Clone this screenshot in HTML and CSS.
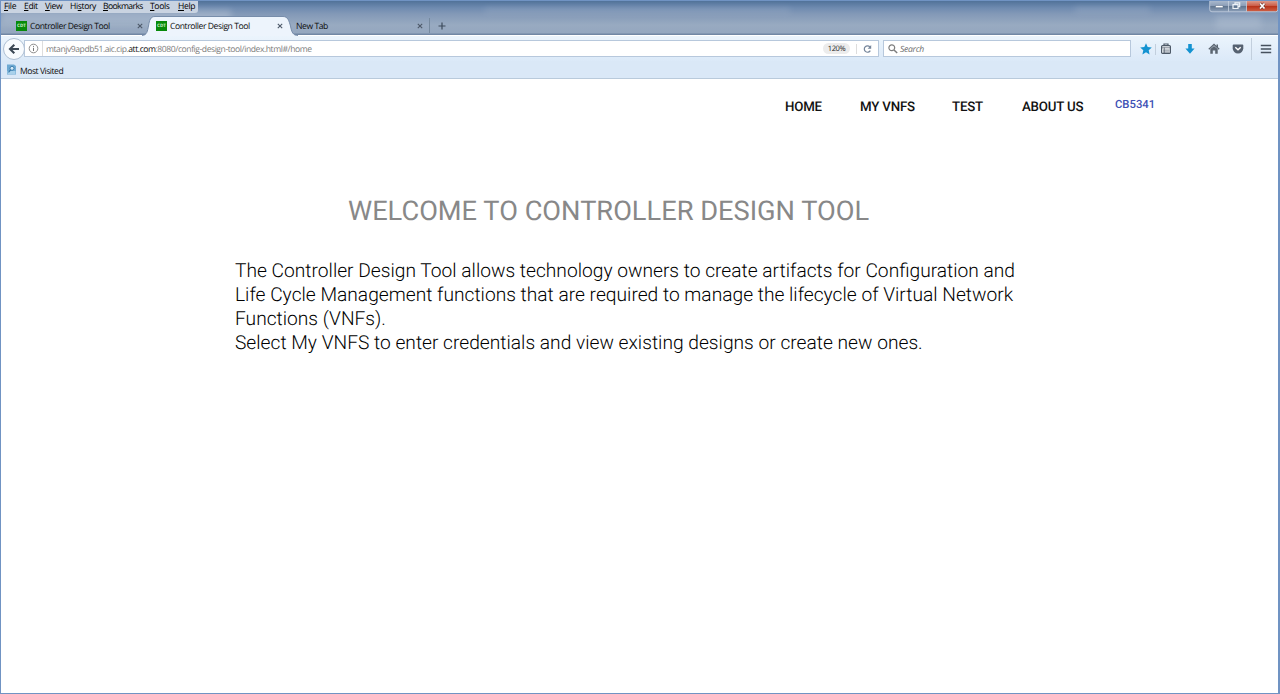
FILE: index.html
```html
<!DOCTYPE html>
<html lang="en">
<head>
<meta charset="utf-8">
<title>Controller Design Tool</title>
<link rel="stylesheet" href="styles.css">
</head>
<body>
<div class="window">
  <header class="titlebar">
    <div class="smudges"><i class="smudge smudge-a"></i><i class="smudge smudge-b"></i><i class="smudge smudge-c"></i><i class="smudge smudge-d"></i></div>
    <div class="top-row">
      <nav class="menubar">
        <span class="menu m-file"><u>F</u>ile</span><span class="menu m-edit"><u>E</u>dit</span><span class="menu m-view"><u>V</u>iew</span><span class="menu m-history">Hi<u>s</u>tory</span><span class="menu m-bookmarks"><u>B</u>ookmarks</span><span class="menu m-tools"><u>T</u>ools</span><span class="menu m-help"><u>H</u>elp</span>
      </nav>
      <svg class="controls" width="70" height="12" viewBox="0 0 70 12">
        <defs>
          <linearGradient id="glass" x1="0" y1="0" x2="0" y2="1"><stop offset="0" stop-color="#a9b8cc"/><stop offset=".45" stop-color="#8b9db7"/><stop offset=".5" stop-color="#60758f"/><stop offset="1" stop-color="#8b9eb8"/></linearGradient>
          <linearGradient id="red" x1="0" y1="0" x2="0" y2="1"><stop offset="0" stop-color="#dc9a8b"/><stop offset=".45" stop-color="#cc5d48"/><stop offset=".5" stop-color="#b83219"/><stop offset="1" stop-color="#cf6146"/></linearGradient>
        </defs>
        <path d="M1 0H37.500V10.500H3Q1 10.500 1 8.500Z" fill="url(#glass)"/>
        <path d="M37.500 0H68.500V8.500Q68.500 10.500 66.500 10.500H37.500Z" fill="url(#red)"/>
        <path d="M.7 0V8.500Q.7 10.800 3 10.800H66.500Q68.800 10.800 68.800 8.500V0M19.500 0V10.500M37.500 0V10.500" fill="none" stroke="#c6d0de" stroke-width=".8"/>
        <path d="M6.500 4.500H14V6.700H6.500Z" fill="#fff" stroke="#566982" stroke-width=".5"/>
        <path d="M24 3.500H29V7.500H24ZM26 3V1.800H30.700V5.700H29.500" fill="none" stroke="#eef2f7" stroke-width="1.200"/>
        <path d="M51 2.500L55.500 7.500M55.500 2.500L51 7.500" stroke="#70392f" stroke-width="2.800"/>
        <path d="M51 2.500L55.500 7.500M55.500 2.500L51 7.500" stroke="#fff" stroke-width="1.700"/>
      </svg>
    </div>
    <div class="tabs">
      <div class="tab"><span class="favicon">CDT</span><span class="tab-title">Controller Design Tool</span><svg class="close" viewBox="0 0 6 6"><path d="M.8.8L5.200 5.200M5.200.8L.8 5.200"/></svg></div>
      <div class="tab active">
        <svg class="tab-shape" width="156" height="20" viewBox="0 0 156 20"><path d="M0 19.500C5 19.300 5.500 15 6.500 10C7.500 4 8.500 .5 13 .5H141C146 .5 147 5 148.500 10C149.500 16 151 19.500 156 19.500V20H0Z" fill="#edf4fc"/><path d="M0 19.500C5 19.300 5.500 15 6.500 10C7.500 4 8.500 .5 13 .5H141C146 .5 147 5 148.500 10C149.500 16 151 19.500 156 19.500" fill="none" stroke="#6f86a5" stroke-width=".9"/></svg>
        <span class="favicon">CDT</span><span class="tab-title">Controller Design Tool</span><svg class="close" viewBox="0 0 6 6"><path d="M.8.8L5.200 5.200M5.200.8L.8 5.200"/></svg>
      </div>
      <div class="tab last"><span class="tab-title newtab">New Tab</span><svg class="close" viewBox="0 0 6 6"><path d="M.8.8L5.200 5.200M5.200.8L.8 5.200"/></svg></div>
      <svg class="plus" width="8" height="8" viewBox="0 0 8 8"><path d="M4 .5V7.500M.5 4H7.500" stroke="#3d4b5c" stroke-width="1.200"/></svg>
    </div>
  </header>

  <div class="navbar">
    <svg class="back" width="24" height="24" viewBox="0 0 24 24"><circle cx="12" cy="12" r="10.500" fill="#f8fbfe" stroke="#aebfd3"/><path d="M17 12H8.500M12.300 7.800L8 12L12.300 16.200" fill="none" stroke="#3b4754" stroke-width="2.100"/></svg>
    <div class="urlbar">
      <svg class="info" width="11" height="11" viewBox="0 0 11 11"><circle cx="5.500" cy="5.500" r="4.300" fill="none" stroke="#828282" stroke-width=".9"/><path d="M5.500 4.800V8M5.500 2.900V3.900" stroke="#777" stroke-width="1"/></svg>
      <span class="url">mtanjv9apdb51.aic.cip.<b>att.com</b>:8080/config-design-tool/index.html#/home</span>
      <span class="zoom">120%</span>
      <svg class="reload" width="10" height="10" viewBox="0 0 10 10"><path d="M7.800 6.600A3.200 3.200 0 1 1 7.400 2.900" fill="none" stroke="#75859a" stroke-width="1.200"/><path d="M8.700 1V4.700H5.200Z" fill="#75859a"/></svg>
    </div>
    <div class="search">
      <svg width="10" height="10" viewBox="0 0 10 10"><circle cx="3.800" cy="3.800" r="2.900" fill="none" stroke="#7d7d7d" stroke-width="1.200"/><path d="M6 6L9.200 9" stroke="#7d7d7d" stroke-width="1.500"/></svg>
      <span>Search</span>
    </div>
    <div class="tools">
      <svg width="12" height="12" viewBox="0 0 12 12"><path d="M6 .3L7.700 4.100L11.800 4.500L8.700 7.200L9.600 11.400L6 9.200L2.400 11.400L3.300 7.200L.2 4.500L4.300 4.100Z" fill="#1493d1"/></svg>
      <i class="rule short"></i>
      <svg class="clip" width="12" height="12" viewBox="0 0 12 12"><path d="M4 2V1H8V2" fill="none" stroke="#4d5967" stroke-width="1.200"/><rect x="1.600" y="2.600" width="8.800" height="7.800" rx="1" fill="#f5f8fb" stroke="#4d5967" stroke-width="1.200"/><path d="M2 4.800H10M3 7.100H9.500M3 9H9.500M4.300 4.500V10" stroke="#4d5967" stroke-width=".7"/></svg>
      <svg class="down" width="12" height="12" viewBox="0 0 12 12"><path d="M4.200 1H7.800V5.400H10.600L6 10.700L1.400 5.400H4.200Z" fill="#1493d1"/></svg>
      <svg class="home" width="12" height="12" viewBox="0 0 12 12"><path d="M.8 6.200L6 1.500L11.200 6.200" fill="none" stroke="#5b6570" stroke-width="1.300"/><path d="M2.300 6L6 2.900L9.700 6V10.700H7.200V7.400H4.800V10.700H2.300ZM8.500 1.600H10V4.700L8.500 3.400Z" fill="#5b6570"/></svg>
      <svg class="pocket" width="12" height="12" viewBox="0 0 12 12"><path d="M1.700 1.500H10.300Q11.300 1.500 11.300 2.500V5.300A5.300 5.300 0 0 1 .7 5.300V2.500Q.7 1.500 1.700 1.500Z" fill="#566271"/><path d="M3.300 4.200L6 6.800L8.700 4.200" fill="none" stroke="#fff" stroke-width="1.400"/></svg>
      <i class="rule tall"></i>
      <svg class="burger" width="12" height="12" viewBox="0 0 12 12"><path d="M.8 2.500H11.200M.8 6H11.200M.8 9.500H11.200" stroke="#46515e" stroke-width="1.700"/></svg>
    </div>
  </div>

  <div class="bookmarks">
    <svg width="11" height="11" viewBox="0 0 11 11"><path d="M1 .5H8L10 2V10.500H1Z" fill="#6faad3"/><path d="M1.500 7H9.500V10H1.500Z" fill="#a9d1eb"/><circle cx="6" cy="4.300" r="2" fill="#d5eaf7" stroke="#3477a9" stroke-width=".9"/><path d="M4.600 5.800L2.500 8.300" stroke="#3477a9" stroke-width="1.200"/></svg>
    <span class="bookmark">Most Visited</span>
  </div>

  <main class="page">
    <nav class="site-nav"><a class="n-home">HOME</a><a class="n-vnfs">MY VNFS</a><a class="n-test">TEST</a><a class="n-about">ABOUT US</a><a class="user">CB5341</a></nav>
    <h1>WELCOME TO CONTROLLER DESIGN TOOL</h1>
    <p>The Controller Design Tool allows technology owners to create artifacts for Configuration and<br>Life Cycle Management functions that are required to manage the lifecycle of Virtual Network<br>Functions (VNFs).<br>Select My VNFS to enter credentials and view existing designs or create new ones.</p>
  </main>
</div>
</body>
</html>
```
FILE: styles.css
```css
* { box-sizing: border-box; }
body { margin: 0; font-family: "Open Sans", "Noto Sans", sans-serif; font-size: 8.6px; letter-spacing: -.43px; text-rendering: geometricPrecision; color: #0c0c0c; }
svg { display: block; flex: none; }
.window { display: flex; flex-direction: column; height: 694px; border: 1px solid #7093c3; border-right-width: 2px; background: #fff; overflow: hidden; }

.titlebar { position: relative; height: 34px; background: linear-gradient(#517299, #6f8bb0 7px, #8399b7 13px, #98aac1 24px, #94a7bf 32px, #7187a4 33px); }
.smudges { position: absolute; inset: 0; overflow: hidden; }
.smudge { position: absolute; filter: blur(3px); background: #b5c3d5; opacity: .25; }
.smudge-a { left: 484px; top: 7px; width: 305px; height: 5px; }
.smudge-b { left: 1074px; top: 6px; width: 75px; height: 6px; }
.smudge-c { left: 0; top: 9px; width: 230px; height: 14px; opacity: .5; }
.smudge-d { left: 1215px; top: 15px; width: 45px; height: 13px; opacity: .4; }
.top-row { position: relative; display: flex; justify-content: space-between; height: 15px; }
.menubar { display: flex; width: 197px; height: 12px; padding-left: 3px; line-height: 11px; background: #c9d3e1; border-radius: 0 0 3px 0; color: #000; letter-spacing: -.38px; white-space: nowrap; }
.menu { flex: none; }
.menu u { text-underline-offset: 1px; text-decoration-thickness: 1px; }
.m-file { width: 20px; }
.m-edit { width: 21px; }
.m-view { width: 25px; }
.m-history { width: 33px; }
.m-bookmarks { width: 47px; letter-spacing: -.6px; }
.m-tools { width: 28px; }
.controls { margin-right: -1px; }

.tabs { position: relative; display: flex; height: 19px; padding-left: 9px; }
.tab { position: relative; display: flex; align-items: center; width: 140px; height: 19px; padding: 0 7px 0 6px; }
.tab.active { z-index: 1; }
.tab.last { border-right: 1px solid transparent; border-image: linear-gradient(transparent 15%, #75899f 15%, #75899f 85%, transparent 85%) 1; padding-right: 6px; }
.tab-shape { position: absolute; left: -8px; top: 0; }
.favicon { position: relative; width: 11px; height: 10px; background: #078a0a; color: #d8f2d8; font: bold 4.5px/10px "Open Sans", sans-serif; letter-spacing: 0; text-align: center; }
.tab-title { position: relative; flex: 1; margin-left: 3px; line-height: 12px; white-space: nowrap; }
.newtab { margin-left: 0; }
.close { position: relative; width: 6px; height: 6px; fill: none; stroke: #4d5969; stroke-width: 1.1; }
.plus { margin: 6px 0 0 8px; }

.navbar { display: flex; align-items: center; height: 26px; padding-left: 1px; border-top: 1px solid #fff; background: linear-gradient(#ebf4fc, #dbe9f8); }
.back { position: relative; z-index: 1; }
.urlbar { display: flex; align-items: center; width: 855px; height: 17px; margin-left: -2px; padding-left: 3px; border: 1px solid #b7c8dc; background: #fff; }
.url { flex: 1; margin-left: 3px; padding: 1px 0 0 3px; border-left: 1px solid #ddd; color: #808080; line-height: 14px; letter-spacing: -.45px; white-space: nowrap; }
.url b { color: #111; font-weight: 400; }
.zoom { width: 27px; height: 11px; border-radius: 6px; background: #ececec; color: #222; font-size: 7.5px; line-height: 12px; text-align: center; }
.reload { width: 22px; height: 10px; margin-left: 6px; border-left: 1px solid #ddd; }
.search { display: flex; align-items: center; gap: 2px; width: 248px; height: 17px; margin-left: 4px; padding-left: 4px; border: 1px solid #b7c8dc; background: #fff; color: #6c6c6c; font-style: italic; letter-spacing: -.3px; }
.tools { display: flex; align-items: center; margin-left: 9px; padding-top: 1px; }
.rule { width: 1px; background: #c2cfdd; }
.short { height: 11px; margin: 0 4px 0 3px; }
.tall { height: 22px; margin: 0 8px 0 7px; }
.down, .home, .pocket { margin-left: 12px; }

.bookmarks { display: flex; align-items: center; gap: 3px; height: 18px; padding-left: 5px; border-bottom: 1px solid #b9cadb; background: #dae8f7; }
.bookmark { padding-top: 2px; letter-spacing: -.48px; }

.page { flex: 1; font-family: Roboto, sans-serif; letter-spacing: 0; }
.site-nav { display: flex; height: 54px; padding: 20px 0 0 784px; font-size: 13.3px; font-weight: 500; letter-spacing: -.2px; line-height: 17px; color: #111; white-space: nowrap; }
.n-home { width: 75px; }
.n-vnfs { width: 92px; }
.n-test { width: 70px; }
.n-about { width: 93px; }
.user { margin-top: -3px; font-size: 11.3px; letter-spacing: 0; color: #3f51b5; }
h1 { margin: 61px 0 0 347px; font-size: 27.22px; font-weight: 400; line-height: 34px; color: #888; white-space: nowrap; }
p { margin: 31px 0 0 234px; font-size: 19.2px; font-weight: 300; line-height: 24px; color: #000; white-space: nowrap; }
```
